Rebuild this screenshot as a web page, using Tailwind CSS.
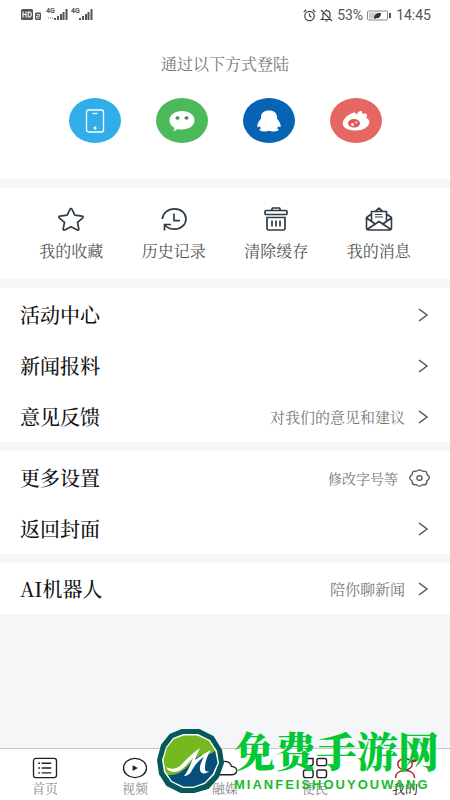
<!DOCTYPE html>
<html lang="zh-CN">
<head>
<meta charset="utf-8">
<meta name="viewport" content="width=device-width, initial-scale=1">
<title>我的</title>
<script src="https://cdn.jsdelivr.net/npm/@tailwindcss/browser@4"></script>
</head>
<body class="relative flex min-h-screen flex-col bg-[#f5f6f8] font-['Noto_Serif_CJK_SC','Noto_Sans_CJK_SC',serif] text-[#555]">

<header class="flex h-[30px] items-center justify-between bg-white pr-[19px] pl-[21px] font-['Roboto','Liberation_Sans',sans-serif] text-sm text-[#555]">
  <div class="flex items-center">
    <svg class="h-5 w-[72px]" viewBox="0 0 72 20" fill="#555" aria-label="信号">
      <rect x="0" y="4" width="12" height="11" rx="1.5"/>
      <path d="M2 6.500v6M5 6.500v6M2 9.500h3M7.200 7v5h1.300q1.700 0 1.700-2.500t-1.700-2.500z" stroke="#fff" fill="none" stroke-width="1.100"/>
      <rect x="14" y="7.500" width="6" height="7.500" rx="1"/>
      <path d="M15.500 9.500h3v1.800h-3v1.800h3" stroke="#fff" fill="none" stroke-width=".8"/>
      <text x="25" y="8" font-size="7" font-weight="700">4G</text>
      <path d="M27 13h5" stroke="#bbb" stroke-width="2" stroke-dasharray="1 1"/>
      <path d="M33 13h2v2h-2zM36 11h2v4h-2zM39 9h2v6h-2zM41.500 7h2v8h-2zM44.500 4h2v11h-2z"/>
      <text x="50" y="8" font-size="7" font-weight="700">4G</text>
      <path d="M58 13h2v2h-2zM61 11h2v4h-2zM64 9h2v6h-2zM66.500 7h2v8h-2zM69.500 4h2v11h-2z"/>
    </svg>
  </div>
  <div class="flex items-center gap-1">
    <svg class="size-[13px]" viewBox="0 0 13 13" fill="none" stroke="#444" stroke-width="1.200"><circle cx="6.500" cy="7" r="4.700"/><path d="M6.500 4.300V7l2 1.300M.7 3 3.300.8M12.300 3 9.700.8"/></svg>
    <svg class="size-[13px]" viewBox="0 0 13 13" fill="none" stroke="#444" stroke-width="1.200"><path d="M1 1l11 11M3 4v5L1.500 10.500H10M4.500 2.700C5 2.200 6 1.700 6.500 1.700c2 0 3.500 1.500 3.500 3.500v3.300M5.300 12h2.400M6.500 1.700V.5"/></svg>
    <span>53%</span>
    <svg class="h-[11px] w-[25px]" viewBox="0 0 25 11"><rect x=".5" y="1" width="20" height="9" rx="1" fill="#fff" stroke="#888"/><rect x="2" y="2.500" width="10" height="6" fill="#ccc"/><path d="M7 8.500C7 5 9 3 14 3c0 3-1.500 5.500-5 5L8 9z" fill="#333"/><rect x="22" y="3" width="2" height="5" fill="#555"/></svg>
    <time>14:45</time>
  </div>
</header>

<main class="flex flex-col gap-[10px]">
  <div class="flex flex-col gap-[9px] bg-[#f5f5fa]">
    <section class="flex flex-col items-center bg-white pt-[22px] pb-9">
      <h1 class="text-base leading-6 text-[#777]">通过以下方式登陆</h1>
      <div class="mt-[22px] flex gap-[35px]">
        <button aria-label="手机登录" class="flex h-[45px] w-[52px] items-center justify-center rounded-[50%] bg-[#31aeea]">
          <svg class="h-6 w-5" viewBox="0 0 20 24" fill="none" stroke="#fff" stroke-width="1.300"><rect x="1.500" y="1" width="17" height="22" rx="2"/><path d="M7.500 4.500h5"/><circle cx="10" cy="19" r="1.500" fill="#fff" stroke="none"/></svg>
        </button>
        <button aria-label="微信登录" class="flex h-[45px] w-[52px] items-center justify-center rounded-[50%] bg-[#4cba5b]">
          <svg class="h-[22px] w-[26px]" viewBox="0 0 26 22"><path d="M13 1C5.800 1 .5 5 .5 10.300c0 3.200 2 6 5 7.700L4.500 21.500 8.800 19c1.300.4 2.700.6 4.200.6 7.200 0 12.500-4 12.500-9.300S20.200 1 13 1z" fill="#fff"/><ellipse cx="8.500" cy="8" rx="2.100" ry="1.700" fill="#4a8f58"/><ellipse cx="17.500" cy="8" rx="2.100" ry="1.700" fill="#4a8f58"/></svg>
        </button>
        <button aria-label="QQ登录" class="flex h-[45px] w-[52px] items-center justify-center rounded-[50%] bg-[#0764b5]">
          <svg class="h-[22px] w-6" viewBox="0 0 24 22" fill="#fff"><path d="M12 .5C7 .5 4 3.200 4 7c0 .8.100 1.200-.1 1.700C2 11 .3 13.500.3 16c0 1.200.5 1.500 1.100 1 .6-.3 1-.5 1.400-.8.200.8.500 1.400 1.200 2.100-1.200.5-1.700 1.100-1.500 1.800.5 1.600 6.800 1.600 9.500.6 2.700 1 9 1 9.500-.6.200-.7-.3-1.300-1.500-1.800.7-.7 1-1.300 1.200-2.100.4.300.8.500 1.400.8.600.5 1.100.2 1.100-1 0-2.500-1.700-5-3.600-7.300-.2-.5-.1-.9-.1-1.700 0-3.800-3-6.500-8-6.500z"/></svg>
        </button>
        <button aria-label="微博登录" class="flex h-[45px] w-[52px] items-center justify-center rounded-[50%] bg-[#e66762]">
          <svg class="h-[22px] w-7" viewBox="0 0 28 22"><path d="M10.500 3c2-.8 3.800-.5 3.500 2C16 2 18 .6 19.500 1.200c1.300.5.700 1.800.5 2.800 2-1 4.500-.8 5 .8.400 1-.2 2.200-1 3.200 2.500.6 3.500 2.500 3.300 4.500-.5 4.500-6.300 8-13.300 8C6.500 20.500.7 18 .7 13.500.7 9 6 4.700 10.500 3z" fill="#fff"/><ellipse cx="12" cy="13.300" rx="6" ry="4.300" fill="#dc5a55"/><circle cx="10.500" cy="14.500" r="1.500" fill="#fff"/><circle cx="14.300" cy="12.500" r=".9" fill="#fff"/></svg>
        </button>
      </div>
    </section>

    <nav aria-label="快捷功能" class="grid grid-cols-4 bg-white px-5 pt-[18px] pb-4 text-base leading-6">
      <a href="#" class="flex flex-col items-center gap-[7px]">
        <svg class="h-[26px] w-7" viewBox="0 0 28 26" fill="none" stroke="#2f3b46" stroke-width="1.700" stroke-linejoin="round"><path d="M14 2.500c.5 0 .8.300 1 .8l2.800 5.900 7.400 1c.9.100 1.200 1 .6 1.600l-5.300 4.600 1.300 6.500c.2.900-.7 1.500-1.500 1L14 20.800l-6.300 3.100c-.8.500-1.700-.1-1.500-1l1.300-6.500-5.300-4.600c-.6-.6-.3-1.500.6-1.600l7.400-1L13 3.300c.2-.5.500-.8 1-.8z"/></svg>
        <span>我的收藏</span>
      </a>
      <a href="#" class="flex flex-col items-center gap-[7px]">
        <svg class="h-[26px] w-7" viewBox="0 0 28 26" fill="none" stroke="#2f3b46" stroke-width="1.700"><path d="M2.300 13C2.800 7 8 2.800 14.500 2.800c7 0 11.500 4.600 11.500 10.200s-5 10.200-11.500 10.200c-4.200 0-7.300-1.600-9.500-4M4.500 24.500v-6H11M14 7.500v7.200h6"/></svg>
        <span>历史记录</span>
      </a>
      <a href="#" class="flex flex-col items-center gap-[7px]">
        <svg class="h-[26px] w-7" viewBox="0 0 28 26" fill="none" stroke="#2f3b46" stroke-width="1.700"><rect x="3" y="4.500" width="22" height="4" rx="1"/><path d="M9.500 4.500 10.500 2h7l1 2.500M5 11.500h18v11q0 1.500-1.500 1.500h-15Q5 24 5 22.500zM10 14.500v6M14 14.500v6M18 14.500v6"/></svg>
        <span>清除缓存</span>
      </a>
      <a href="#" class="flex flex-col items-center gap-[7px]">
        <svg class="h-[26px] w-7" viewBox="0 0 28 26" fill="none" stroke="#2f3b46" stroke-width="1.600" stroke-linejoin="round"><path d="M6.500 8 1.500 11.500V22q0 2 2 2h21q2 0 2-2V11.500L21.500 8M1.500 12 11 18.500M26.500 12 17 18.500M2 23.500 14 15.500 26 23.500M6.500 15V5.500h15V15M10.500 5.200 14 2.200l3.500 3"/><path d="M10 8.500h7M10 11h8" stroke-width="1.200"/></svg>
        <span>我的消息</span>
      </a>
    </nav>
  </div>

  <ul class="-mt-px bg-white px-5 pt-px text-xl font-medium text-[#111]">
    <li><a href="#" class="flex h-[51px] items-center justify-between">活动中心
      <svg class="h-[14px] w-[14px]" viewBox="0 0 14 14" fill="none" stroke="#555" stroke-width="1.500"><path d="M3 1l8 6-8 6"/></svg></a></li>
    <li><a href="#" class="flex h-[51px] items-center justify-between">新闻报料
      <svg class="h-[14px] w-[14px]" viewBox="0 0 14 14" fill="none" stroke="#555" stroke-width="1.500"><path d="M3 1l8 6-8 6"/></svg></a></li>
    <li><a href="#" class="flex h-[51px] items-center justify-between">意见反馈
      <span class="flex items-center gap-[11px] text-[15px] font-normal text-[#777]">对我们的意见和建议
      <svg class="h-[14px] w-[14px]" viewBox="0 0 14 14" fill="none" stroke="#555" stroke-width="1.500"><path d="M3 1l8 6-8 6"/></svg></span></a></li>
  </ul>

  <ul class="-mt-px bg-white px-5 pt-px text-xl font-medium text-[#111]">
    <li><a href="#" class="flex h-[51px] items-center justify-between">更多设置
      <span class="flex items-center gap-[11px] text-sm font-normal text-[#777]">修改字号等
      <svg class="h-[18px] w-[21px]" viewBox="0 0 21 18" fill="none" stroke="#555" stroke-width="1.300" stroke-linejoin="round"><path d="M8.500 1.500Q10.500.1 12.500 1.500 13.200 2.600 14.700 2.200 17.500 2 17.700 4.200 17.600 5.600 19 6.300 21 7.800 20 9.800 19.400 11 18 11.700 17.600 12.300 17.900 13.500 17.300 16 14.700 15.700 13.200 15.300 12.500 16.500 10.500 17.900 8.500 16.500 7.800 15.300 6.300 15.700 3.700 16 3.200 13.500 3.400 12.300 2.800 11.700.2 10.500.9 8 1.400 6.800 2.900 6 3.500 5.200 3.300 4.200 3.600 2 6.300 2.200 7.800 2.600 8.500 1.500z"/><ellipse cx="10.500" cy="9" rx="2.600" ry="2.300"/></svg></span></a></li>
    <li><a href="#" class="flex h-[51px] items-center justify-between">返回封面
      <svg class="h-[14px] w-[14px]" viewBox="0 0 14 14" fill="none" stroke="#555" stroke-width="1.500"><path d="M3 1l8 6-8 6"/></svg></a></li>
  </ul>

  <ul class="-mt-px bg-white px-5 text-xl font-medium text-[#111]">
    <li><a href="#" class="flex h-[51px] items-center justify-between">AI机器人
      <span class="flex items-center gap-[11px] text-[15px] font-normal text-[#777]">陪你聊新闻
      <svg class="h-[14px] w-[14px]" viewBox="0 0 14 14" fill="none" stroke="#555" stroke-width="1.500"><path d="M3 1l8 6-8 6"/></svg></span></a></li>
  </ul>
</main>

<footer class="relative mt-auto">
  <nav aria-label="主导航" class="grid h-[52px] grid-cols-5 border-t border-[#c8c8cc] bg-white pt-2 text-[13px] leading-4 text-[#888]">
    <a href="#" class="flex flex-col items-center">
      <svg class="h-[23px] w-[26px] shrink-0" viewBox="0 0 26 24" fill="none" stroke="#222" stroke-width="1.400"><rect x="1" y="1.500" width="24" height="20" rx="2.500"/><path d="M9.500 6.500h10M9.500 11.500h10M9.500 16.500h10M6 6.500h1.800M6 11.500h1.800M6 16.500h1.800"/></svg>
      首页</a>
    <a href="#" class="flex flex-col items-center">
      <svg class="h-[23px] w-[26px] shrink-0" viewBox="0 0 26 24" fill="none" stroke="#222" stroke-width="1.400"><ellipse cx="13" cy="11.500" rx="12" ry="10"/><path d="M10.500 8.500v6l5.500-3z" fill="#222" stroke="none"/></svg>
      视频</a>
    <a href="#" class="flex flex-col items-center">
      <svg class="h-[23px] w-[26px] shrink-0" viewBox="0 0 26 24" fill="none" stroke="#222" stroke-width="1.400"><path d="M5.500 18.500C2.500 18.500.8 16.500.8 14.200S2.500 10.500 5 10.200C5.500 6.500 8.500 4.500 12.500 4.500c4 0 6.500 2 7.200 5.200 3.300.3 5.500 2 5.500 4.500 0 2.600-2 4.300-5 4.300z"/></svg>
      融媒</a>
    <a href="#" class="flex flex-col items-center">
      <svg class="h-[23px] w-[26px] shrink-0" viewBox="0 0 26 24" fill="none" stroke="#222" stroke-width="1.500"><path d="M3 1.500h8v5q0 2.500-2.500 2.500H3Q1 9 1 7V3.500Q1 1.500 3 1.500zM17 1.500h6q2 0 2 2V7q0 2-2 2h-6q-2 0-2-2V3.500q0-2 2-2zM3 13.500h6q2 0 2 2V19q0 2.500-2 2.500H3Q1 21.500 1 19v-3.500q0-2 2-2zM17 13.500h6q2 0 2 2V19q0 2.500-2 2.500h-6q-2 0-2-2.500v-3.500q0-2 2-2z"/></svg>
      便民</a>
    <a href="#" aria-current="page" class="flex flex-col items-center text-[#222]">
      <svg class="h-[23px] w-[26px] shrink-0 overflow-visible" viewBox="0 0 26 24" fill="none" stroke="#a3262b" stroke-width="1.500"><ellipse cx="13" cy="7.500" rx="7.500" ry="6"/><path d="M3 22c0-5 4-8 10-8s10 3 10 8"/><path d="M21 3c1 1.500 3 1.500 5-2" stroke-width="3"/></svg>
      我的</a>
  </nav>

  <div class="pointer-events-none absolute right-[11px] bottom-[7px] flex items-center gap-[10px]">
    <svg class="h-16 w-[67px]" viewBox="0 0 67 64" aria-hidden="true">
      <path d="M25 1h17l14 7 8 13 2 13-5 14-10 11-14 4H24L10 56 3 45 1 31 5 16 13 6z" fill="#07575b" stroke="#07575b" stroke-width="2" stroke-linejoin="round"/>
      <path d="M26 5h15l12 6 7 11 2 12-5 12-9 9-12 4H26L14 53 7 43 5 31l4-13 7-9z" fill="#fff"/>
      <path d="M27 6.500h13.500l11.500 5.500 6.500 10.500 2 11.500-5 11-8 8.500-11 4H26.500L15 52 8.500 42.500 6.500 31l3.500-12.500 7-8.500z" fill="#76b820"/>
      <path d="M58 22l2.500 12-5 11-8 8.500-11 4H26.500L15 52l-4-6c11 1 18-6 25-15l8-5c6 0 10-1 14-4z" fill="#064f7c"/>
      <path d="M9 38c5 3 11 2 15-2 6-6 11-12 19-17-2 4-4 8-5 12 5-4 10-7 16-10-4 6-6 12-6 18 0 3 1 4 4 3-2 3-8 4-9-1-.5-4 1-8 4-13-6 4-10 9-13 15-1 2-4 4-7 4 4-5 6-10 9-18-6 6-10 13-18 14-4 0-8-2-9-5z" fill="#fff"/>
    </svg>
    <div class="flex flex-col gap-[7px]">
      <strong class="font-['Noto_Serif_CJK_SC','Noto_Sans_CJK_SC',serif] text-[41px] leading-10 font-black text-[#00c935]">免费手游网</strong>
      <span class="font-['Liberation_Sans',sans-serif] text-[13px] leading-4 font-bold tracking-[2px] text-[#18bd2b]">MIANFEISHOUYOUWANG</span>
    </div>
  </div>
</footer>
</body>
</html>
